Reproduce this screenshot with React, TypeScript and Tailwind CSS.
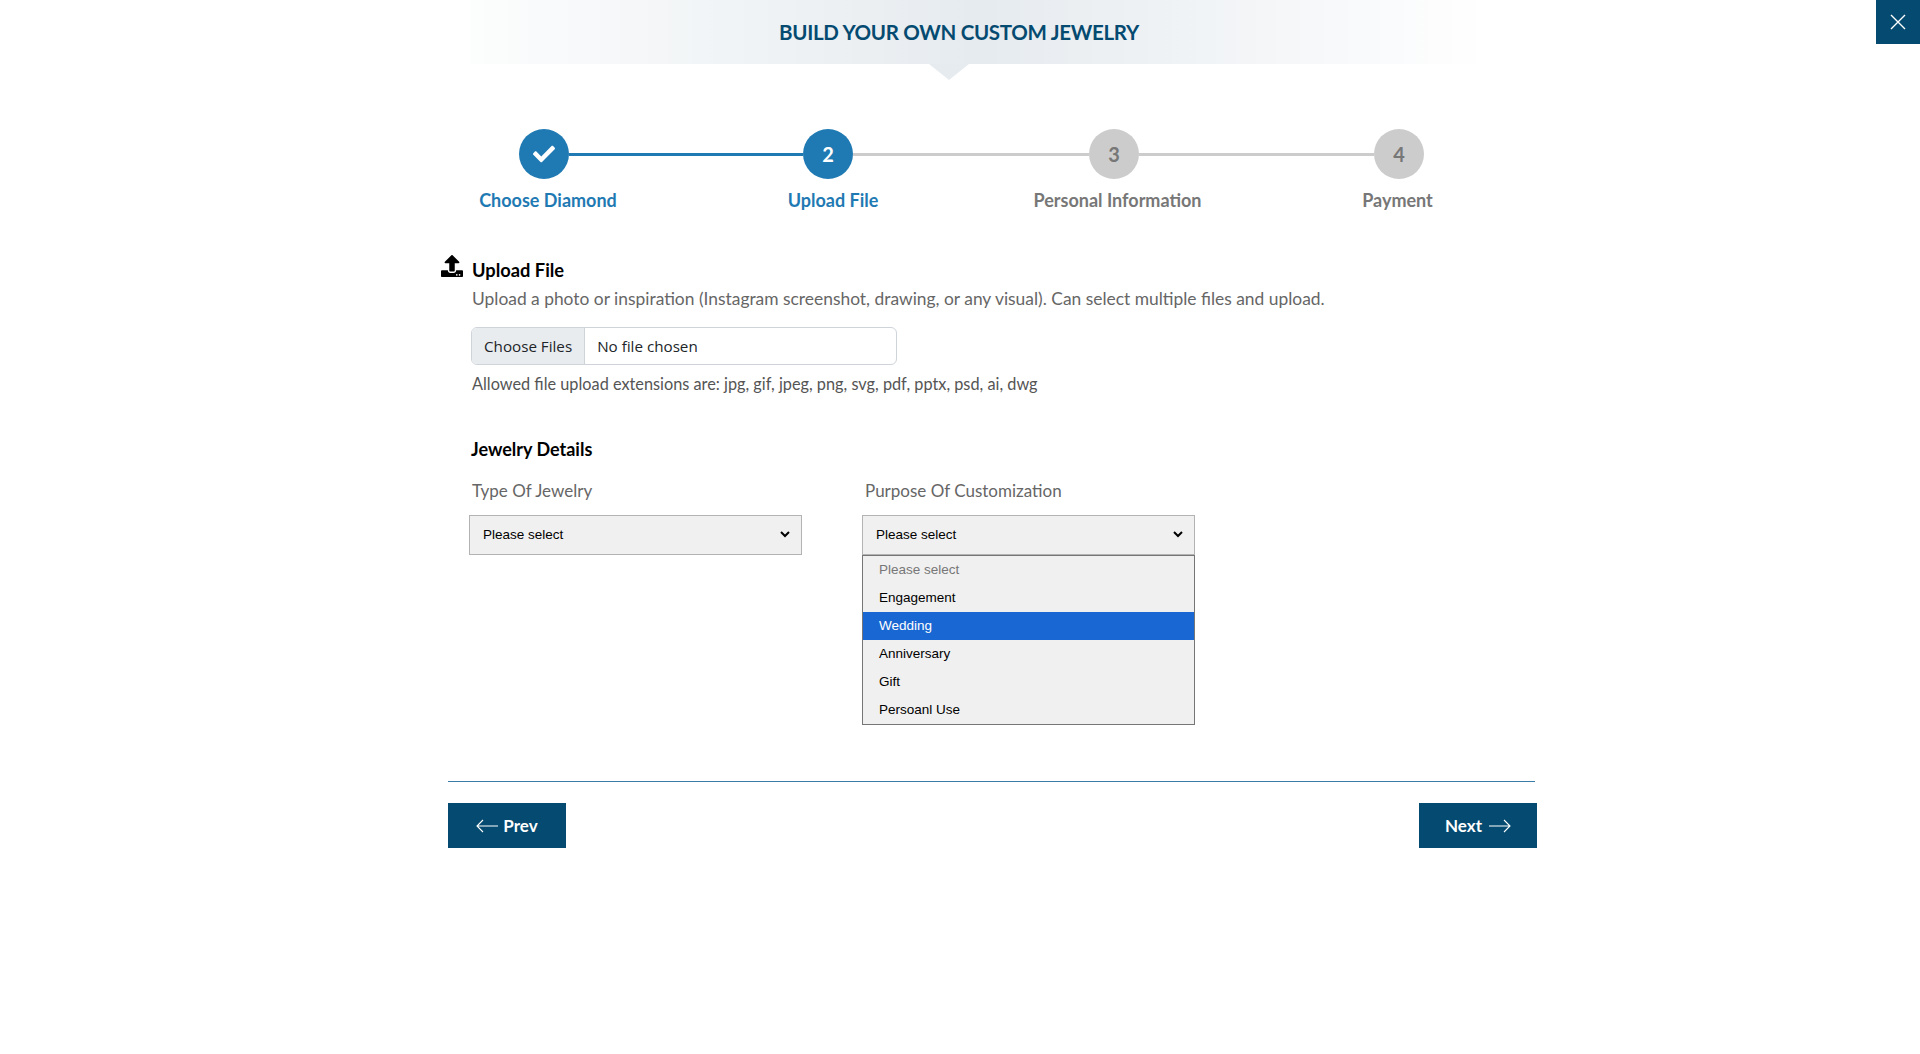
import { FaCheck, FaUpload } from 'react-icons/fa'

const steps = [
  { label: 'Choose Diamond', shift: 'pl-[9px]', on: true },
  { label: 'Upload File', shift: 'pl-[9px]', on: true },
  { label: 'Personal Information', shift: 'pl-[8px]', on: false },
  { label: 'Payment', shift: 'pr-[2px]', on: false },
]

const options = ['Please select', 'Engagement', 'Wedding', 'Anniversary', 'Gift', 'Persoanl Use']

function Arrow({ left }: { left?: boolean }) {
  return (
    <svg width="22" height="14" viewBox="0 0 22 14" fill="none" stroke="white" strokeWidth="1.1" className={left ? 'rotate-180' : ''}>
      <path d="M0 7h21M15 1l6 6-6 6" />
    </svg>
  )
}

function Select({ label }: { label: string }) {
  return (
    <div className="w-[333px]">
      <label className="block ml-[3px] h-[25px] text-[17px] leading-[25px] text-[#666]">{label}</label>
      <div className="relative mt-[12px]">
        <select className="block w-full h-[40px] pl-[13px] pr-[24px] appearance-none bg-[#f0f0f0] border border-[#b3b3b3] text-[13.5px] text-black font-['Liberation_Sans',sans-serif]">
          <option>Please select</option>
        </select>
        <svg width="10" height="7" viewBox="0 0 10 7" fill="none" stroke="black" strokeWidth="2" className="absolute right-[12px] top-[16px] pointer-events-none">
          <path d="M1 1l4 4 4-4" />
        </svg>
      </div>
    </div>
  )
}

export default function App() {
  return (
    <div className="relative h-[1054px] overflow-hidden bg-white font-['Lato',sans-serif]">
      <button className="absolute top-0 right-0 w-[44px] h-[44px] flex items-center justify-center bg-[#054a70]">
        <svg width="16" height="16" viewBox="0 0 16 16" stroke="white" strokeWidth="1.4">
          <path d="M1 1l14 14M15 1L1 15" />
        </svg>
      </button>

      <div className="relative ml-[470px] w-[1020px] h-[64px] pr-[42px] flex items-center justify-center bg-gradient-to-r from-[#fcfdfd] via-[#e6ebef] to-white">
        <h1 className="text-[20.5px] tracking-[-0.3px] font-bold text-[#054a70] uppercase">Build your own custom jewelry</h1>
        <div className="absolute top-full left-[459px] w-[40px] h-[16px] bg-[#e6ebef] [clip-path:polygon(0_0,100%_0,50%_100%)]" />
      </div>

      <div className="ml-[519px] w-[905px] mt-[65px] flex items-center">
        <div className="w-[50px] h-[50px] rounded-full bg-[#1f7ab3] flex items-center justify-center text-white">
          <FaCheck size={22} />
        </div>
        <div className="w-[234px] h-[3px] bg-[#1f7ab3]" />
        <div className="w-[50px] h-[50px] rounded-full bg-[#1f7ab3] flex items-center justify-center text-white text-[20px] font-bold">2</div>
        <div className="w-[236px] h-[3px] bg-[#cccccc]" />
        <div className="w-[50px] h-[50px] rounded-full bg-[#cccccc] flex items-center justify-center text-[#777] text-[20px] font-bold">3</div>
        <div className="flex-1 h-[3px] bg-[#cccccc]" />
        <div className="w-[50px] h-[50px] rounded-full bg-[#cccccc] flex items-center justify-center text-[#777] text-[20px] font-bold">4</div>
      </div>

      <div className="ml-[401px] mt-[8px] flex">
        {steps.map(s => (
          <div key={s.label} className={`w-[285px] text-center text-[18px] leading-[26px] font-bold ${s.shift} ${s.on ? 'text-[#1f7ab3]' : 'text-[#777]'}`}>
            {s.label}
          </div>
        ))}
      </div>

      <div className="ml-[441px] mt-[42px]">
        <div className="flex items-start">
          <FaUpload size={22} className="text-black" />
          <div className="ml-[9px] mt-[2px]">
            <h2 className="text-[18.3px] leading-[26px] font-bold text-black">Upload File</h2>
            <p className="mt-[3px] text-[17.4px] leading-[26px] text-[#666]">
              Upload a photo or inspiration (Instagram screenshot, drawing, or any visual). Can select multiple files and upload.
            </p>
          </div>
        </div>

        <input
          type="file"
          multiple
          className="block ml-[30px] mt-[15px] w-[426px] h-[38px] rounded-[6px] border border-[#ced4da] text-[15.2px] text-[#212529] font-['Open_Sans',sans-serif] file:h-full file:mr-[12px] file:px-[12px] file:border-0 file:border-r file:border-solid file:border-[#ced4da] file:bg-[#e9ecef] file:text-[#212529] file:text-[15.2px]"
        />
        <p className="ml-[31px] mt-[6px] text-[16.3px] leading-[26px] text-[#555]">
          Allowed file upload extensions are: jpg, gif, jpeg, png, svg, pdf, pptx, psd, ai, dwg
        </p>

        <h2 className="ml-[30px] mt-[39px] text-[18px] leading-[26px] font-bold text-black">Jewelry Details</h2>

        <div className="ml-[28px] mt-[16px] relative flex gap-[60px]">
          <Select label="Type Of Jewelry" />
          <div className="relative">
            <Select label="Purpose Of Customization" />
            <ul className="absolute top-full left-0 w-[333px] h-[170px] border border-[#767676] bg-[#f0f0f0] text-[13.5px] font-['Liberation_Sans',sans-serif]">
              {options.map((o, i) => (
                <li
                  key={o}
                  className={`h-[28px] leading-[28px] pl-[16px] ${i === 0 ? 'text-[#777]' : i === 2 ? 'bg-[#1967d2] text-white' : 'text-black'}`}
                >
                  {o}
                </li>
              ))}
            </ul>
          </div>
        </div>
      </div>

      <div className="ml-[448px] w-[1087px] mt-[226px] border-t border-[#3a7ca5]" />
      <div className="ml-[448px] w-[1089px] mt-[21px] flex justify-between">
        <button className="w-[118px] h-[45px] bg-[#054a70] text-white text-[17px] font-bold flex items-center justify-center gap-[5px]">
          <Arrow left /> Prev
        </button>
        <button className="w-[118px] h-[45px] bg-[#054a70] text-white text-[17px] font-bold flex items-center justify-center gap-[7px]">
          Next <Arrow />
        </button>
      </div>
    </div>
  )
}
